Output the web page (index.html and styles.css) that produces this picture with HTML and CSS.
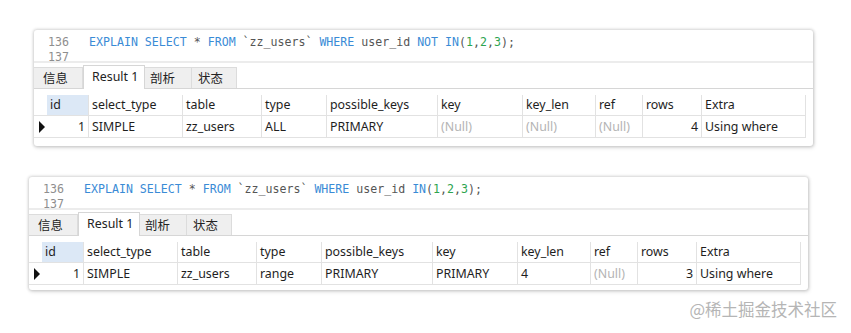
FILE: index.html
```html
<!DOCTYPE html>
<html>
<head>
<meta charset="utf-8">
<link rel="stylesheet" href="styles.css">
</head>
<body>
<div class="page">
  <div class="panel p1">
    <div class="editor">
      <div class="line"><span class="ln">136</span><span class="code"><span class="kw">EXPLAIN</span> <span class="kw">SELECT</span> * <span class="kw">FROM</span> `zz_users` <span class="kw">WHERE</span> user_id <span class="kw">NOT</span> <span class="kw">IN</span>(<span class="num">1</span>,<span class="num">2</span>,<span class="num">3</span>);</span></div>
      <div class="line"><span class="ln">137</span><span class="code"></span></div>
    </div>
    <div class="tabs">
      <div class="tab t-info">信息</div>
      <div class="tab active">Result 1</div>
      <div class="tab t-prof">剖析</div>
      <div class="tab t-stat">状态</div>
    </div>
    <div class="grid">
      <div class="c ind h"></div>
      <div class="c h sel">id</div>
      <div class="c h">select_type</div>
      <div class="c h">table</div>
      <div class="c h">type</div>
      <div class="c h">possible_keys</div>
      <div class="c h">key</div>
      <div class="c h">key_len</div>
      <div class="c h">ref</div>
      <div class="c h">rows</div>
      <div class="c h">Extra</div>

      <div class="c ind"><span class="tri"></span></div>
      <div class="c r">1</div>
      <div class="c">SIMPLE</div>
      <div class="c">zz_users</div>
      <div class="c">ALL</div>
      <div class="c">PRIMARY</div>
      <div class="c null">(Null)</div>
      <div class="c null">(Null)</div>
      <div class="c null">(Null)</div>
      <div class="c r">4</div>
      <div class="c">Using where</div>
    </div>
  </div>

  <div class="panel p2">
    <div class="editor">
      <div class="line"><span class="ln">136</span><span class="code"><span class="kw">EXPLAIN</span> <span class="kw">SELECT</span> * <span class="kw">FROM</span> `zz_users` <span class="kw">WHERE</span> user_id <span class="kw">IN</span>(<span class="num">1</span>,<span class="num">2</span>,<span class="num">3</span>);</span></div>
      <div class="line"><span class="ln">137</span><span class="code"></span></div>
    </div>
    <div class="tabs">
      <div class="tab t-info">信息</div>
      <div class="tab active">Result 1</div>
      <div class="tab t-prof">剖析</div>
      <div class="tab t-stat">状态</div>
    </div>
    <div class="grid">
      <div class="c ind h"></div>
      <div class="c h sel">id</div>
      <div class="c h">select_type</div>
      <div class="c h">table</div>
      <div class="c h">type</div>
      <div class="c h">possible_keys</div>
      <div class="c h">key</div>
      <div class="c h">key_len</div>
      <div class="c h">ref</div>
      <div class="c h">rows</div>
      <div class="c h">Extra</div>

      <div class="c ind"><span class="tri"></span></div>
      <div class="c r">1</div>
      <div class="c">SIMPLE</div>
      <div class="c">zz_users</div>
      <div class="c">range</div>
      <div class="c">PRIMARY</div>
      <div class="c">PRIMARY</div>
      <div class="c">4</div>
      <div class="c null">(Null)</div>
      <div class="c r">3</div>
      <div class="c">Using where</div>
    </div>
  </div>

  <div class="mark">@稀土掘金技术社区</div>
</div>
</body>
</html>
```

FILE: styles.css
```css
html, body {
  margin: 0;
  padding: 0;
  background: #ffffff;
}
.page {
  width: 851px;
  height: 333px;
  padding-top: 30px;
  box-sizing: border-box;
  display: flex;
  flex-direction: column;
  font-family: "Noto Sans", "Noto Sans CJK SC", sans-serif;
  font-size: 12.4px;
  color: #1e1e1e;
}
.panel {
  width: 779px;
  height: 116px;
  flex: none;
  background: #fff;
  border-radius: 3px;
  box-shadow: 0 0 3px 1px rgba(0,0,0,0.16), 1px 2px 4px rgba(0,0,0,0.10);
  box-sizing: border-box;
  display: flex;
  flex-direction: column;
  overflow: hidden;
}
.p1 { margin-left: 34px; }
.p2 { margin-left: 29px; margin-top: 31px; height: 113px; }

.editor {
  height: 33px;
  flex: none;
  padding-top: 5px;
  box-sizing: border-box;
  border-bottom: 2px solid #ececec;
  font-family: "DejaVu Sans Mono", monospace;
  font-size: 11.6px;
}
.line {
  display: flex;
  height: 15px;
  line-height: 15px;
}
.ln {
  width: 55px;
  padding-left: 14px;
  box-sizing: border-box;
  color: #8e8e8e;
}
.code { color: #555; white-space: pre; }
.kw { color: #3a8bd6; }
.num { color: #2da44e; }

.tabs {
  display: flex;
  flex: none;
  align-items: flex-end;
  height: 26px;
  border-bottom: 1px solid #d6d6d6;
  box-sizing: border-box;
}
.tab {
  height: 21px;
  line-height: 21px;
  box-sizing: border-box;
  background: #efefef;
  border: 1px solid #dcdcdc;
  border-bottom: none;
  font-size: 12.4px;
  color: #222;
}
.t-info { width: 49px; padding-left: 9px; border-left: none; }
.tab.active {
  background: #fff;
  height: 24px;
  line-height: 22px;
  width: 62px;
  padding-left: 8px;
  margin-bottom: -1px;
  border-color: #d6d6d6;
}
.t-prof { width: 47px; padding-left: 5px; border-left: none; }
.t-stat { width: 45px; padding-left: 6px; border-left: none; }

.grid {
  margin-top: 6px;
  display: grid;
  grid-template-columns: 13px 42px 94px 79px 65px 111px 85px 73px 47px 59px 104px;
  grid-template-rows: 21px 22px;
}
.c {
  border-right: 1px solid #e2e2e2;
  border-bottom: 1px solid #e2e2e2;
  padding: 0 3px;
  line-height: 20px;
  white-space: nowrap;
  overflow: hidden;
}
.grid .c:nth-child(n+12) { line-height: 21px; }
.c.ind { border-right: none; padding: 0; display: flex; align-items: center; justify-content: center; }
.c.sel { background: #dce8f6; }
.c.r { text-align: right; }
.c.null { color: #b4b4b4; }
.tri {
  width: 0;
  height: 0;
  border-top: 6px solid transparent;
  border-bottom: 6px solid transparent;
  border-left: 6px solid #111;
  margin-left: 3px;
}

.mark {
  align-self: flex-end;
  margin-right: 14px;
  margin-top: 9px;
  font-family: "Noto Sans CJK SC", sans-serif;
  font-size: 16.5px;
  line-height: 20px;
  color: #b5b5b5;
}
```
